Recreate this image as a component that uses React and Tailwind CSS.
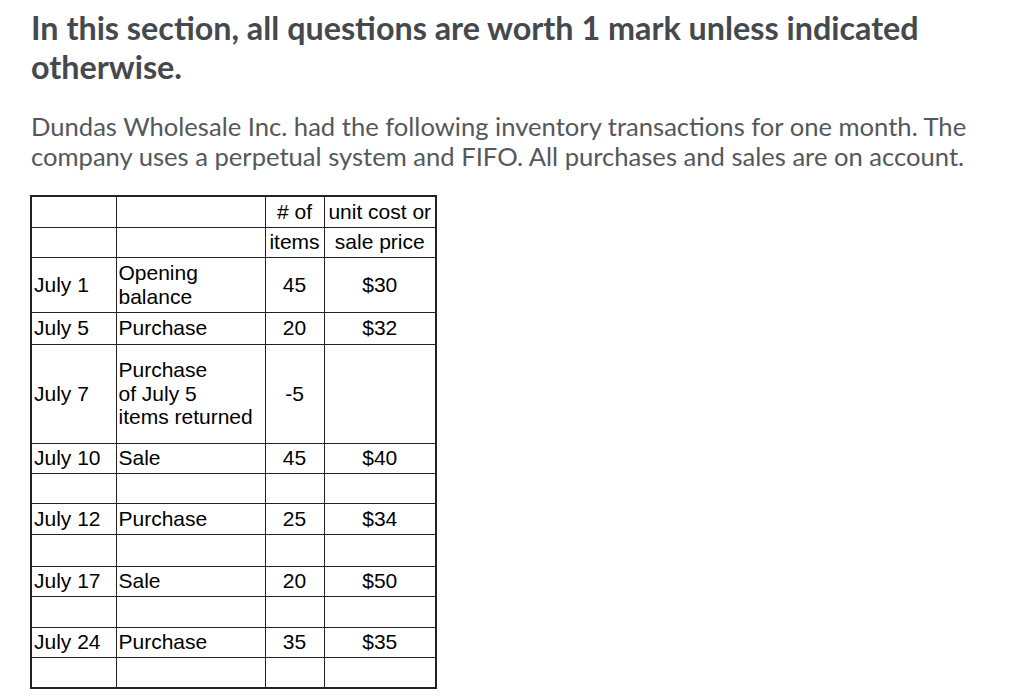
export default function App() {
  const rows = [
    { h: 31, d: '', t: '', n: '# of', p: 'unit cost or' },
    { h: 30, d: '', t: '', n: 'items', p: 'sale price' },
    { h: 55, d: 'July 1', t: ['Opening', 'balance'], n: '45', p: '$30' },
    { h: 32, d: 'July 5', t: ['Purchase'], n: '20', p: '$32' },
    { h: 99, d: 'July 7', t: ['Purchase', 'of July 5', 'items returned'], n: '-5', p: '' },
    { h: 30, d: 'July 10', t: ['Sale'], n: '45', p: '$40' },
    { h: 30, d: '', t: '', n: '', p: '' },
    { h: 31, d: 'July 12', t: ['Purchase'], n: '25', p: '$34' },
    { h: 32, d: '', t: '', n: '', p: '' },
    { h: 30, d: 'July 17', t: ['Sale'], n: '20', p: '$50' },
    { h: 31, d: '', t: '', n: '', p: '' },
    { h: 30, d: 'July 24', t: ['Purchase'], n: '35', p: '$35' },
    { h: 31, d: '', t: '', n: '', p: '' },
  ]

  return (
    <div className="min-h-screen bg-white px-[31px] pt-[8px]">
      <h2 className="font-['Lato',sans-serif] font-bold text-[32.3px] leading-[39px] text-[#45494d] w-[940px]">
        In this section, all questions are worth 1 mark unless indicated otherwise.
      </h2>

      <p className="mt-[25px] font-['Lato',sans-serif] text-[25.6px] leading-[30px] text-[#54585c] w-[960px]">
        Dundas Wholesale Inc. had the following inventory transactions for one month. The company uses a perpetual system and FIFO. All purchases and sales are on account.
      </p>

      {/* Inventory table */}
      <table className="mt-[24px] -ml-px border-collapse border-2 border-[#222] font-['Liberation_Sans',Arial,sans-serif] text-[21px] leading-[23.5px] text-black">
        <colgroup>
          <col className="w-[85px]" />
          <col className="w-[149px]" />
          <col className="w-[59px]" />
          <col className="w-[112px]" />
        </colgroup>
        <tbody>
          {rows.map((r, i) => (
            <tr key={i} style={{ height: r.h }}>
              <td className="border border-[#222] px-[2px] align-middle whitespace-nowrap">{r.d}</td>
              <td className="border border-[#222] px-[2px] align-middle whitespace-nowrap">
                {Array.isArray(r.t) && r.t.map((line) => <div key={line}>{line}</div>)}
              </td>
              <td className="border border-[#222] p-0 text-center align-middle whitespace-nowrap">{r.n}</td>
              <td className="border border-[#222] p-0 text-center align-middle whitespace-nowrap">{r.p}</td>
            </tr>
          ))}
        </tbody>
      </table>
    </div>
  )
}
